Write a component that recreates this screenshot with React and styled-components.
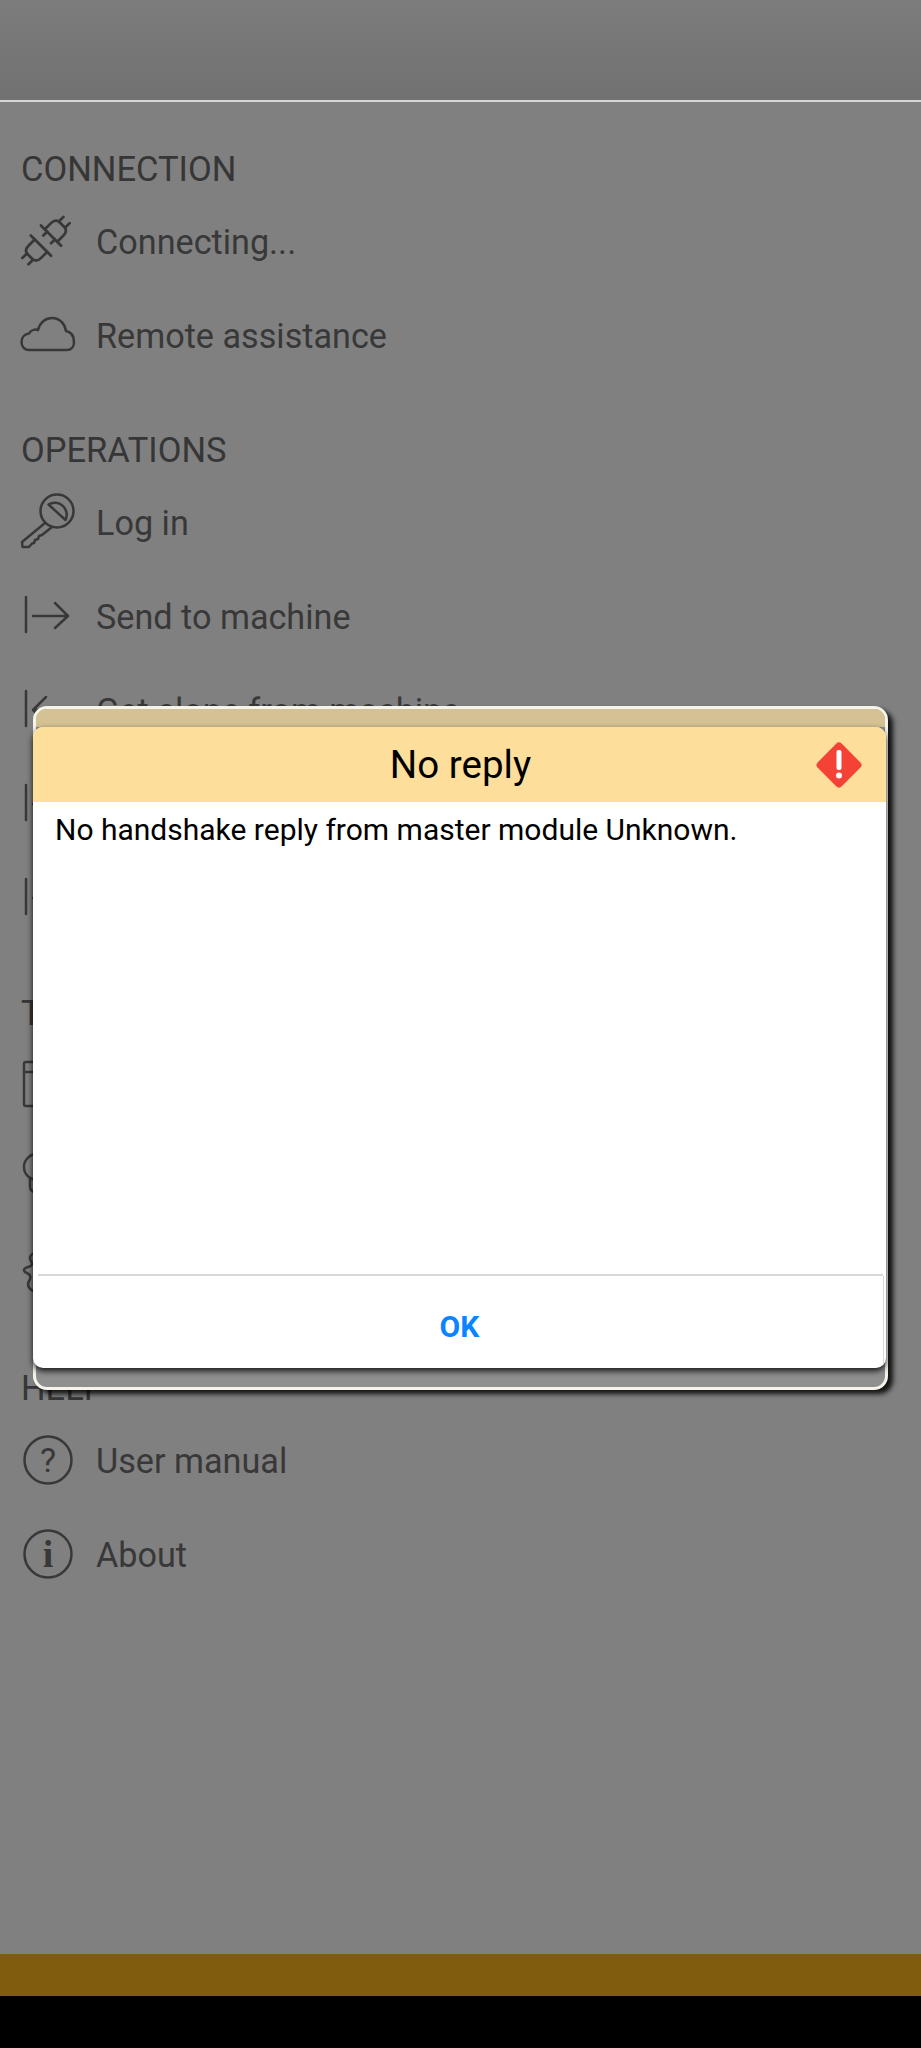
import React from 'react';
import styled, { createGlobalStyle } from 'styled-components';

const GlobalStyle = createGlobalStyle`
  html, body {
    margin: 0;
    padding: 0;
    background: #000;
  }
`;

const Screen = styled.div`
  position: relative;
  width: 921px;
  height: 2048px;
  display: flex;
  flex-direction: column;
  overflow: hidden;
  font-family: Roboto, "Liberation Sans", sans-serif;
`;

const Header = styled.div`
  height: 100px;
  flex: none;
  background: linear-gradient(#7c7c7c, #717171);
  border-bottom: 2px solid #d6d6d6;
`;

const Menu = styled.div`
  flex: 1;
  background: #808080;
  padding-top: 42px;
  display: flex;
  flex-direction: column;
  gap: 43px;
`;

const Section = styled.div`
  display: flex;
  flex-direction: column;
`;

const Heading = styled.div`
  height: 50px;
  line-height: 50px;
  padding-left: 21px;
  font-size: 34.5px;
  color: #363636;
`;

const Row = styled.div`
  height: 94px;
  display: flex;
  align-items: center;
  gap: 24px;
  padding-left: 20px;
`;

const Label = styled.span`
  padding-top: 2px;
  font-size: 34.2px;
  color: #383838;
`;

const IconBox = styled.svg`
  width: 52px;
  height: 52px;
  flex: none;
  overflow: visible;
  fill: none;
  stroke: #383838;
  stroke-width: 2.5;
  stroke-linejoin: round;
  stroke-linecap: round;
`;

const GlyphText = styled.text`
  stroke: none;
  fill: #383838;
  text-anchor: middle;
  font-size: ${(p) => p.$size}px;
  font-family: ${(p) => p.$serif ? '"Liberation Serif", serif' : 'Roboto, sans-serif'};
  font-weight: ${(p) => p.$serif ? 700 : 400};
`;

const Gold = styled.div`
  height: 42px;
  flex: none;
  background: #7f5c0e;
`;

const NavBar = styled.div`
  height: 52px;
  flex: none;
  background: #000;
`;

const DialogFrame = styled.div`
  position: absolute;
  left: 33px;
  top: 706px;
  width: 855px;
  height: 684px;
  box-sizing: border-box;
  border: 3px solid #f6f3ea;
  border-radius: 14px;
  background: #8f8f8f;
  box-shadow: 5px 4px 5px rgba(0, 0, 0, 0.85);
  display: flex;
  flex-direction: column;
`;

const TopBand = styled.div`
  height: 18px;
  flex: none;
  background: #d4c294;
  border-radius: 10px 10px 0 0;
`;

const Card = styled.div`
  height: 641px;
  flex: none;
  margin: 0 -1px 0 -3px;
  display: flex;
  flex-direction: column;
  background: #fff;
  border-radius: 10px;
  overflow: hidden;
  box-shadow: 0 3px 6px rgba(0, 0, 0, 0.85);
`;

const TitleBar = styled.div`
  position: relative;
  height: 75px;
  flex: none;
  padding-left: 2px;
  display: flex;
  align-items: center;
  justify-content: center;
  background: #fddf9b;
  font-size: 38.5px;
  color: #000;
`;

const WarnIcon = styled.svg`
  position: absolute;
  right: 23px;
  top: 14px;
  width: 48px;
  height: 48px;
`;

const Message = styled.div`
  flex: 1;
  padding: 10px 22px;
  font-size: 30px;
  line-height: 36px;
  color: #000;
`;

const Divider = styled.div`
  height: 2px;
  flex: none;
  margin: 0 3px 0 5px;
  background: #d8d8d8;
`;

const OkButton = styled.div`
  height: 92px;
  padding: 8px 0 0 3px;
  box-sizing: border-box;
  flex: none;
  display: flex;
  align-items: center;
  justify-content: center;
  margin-right: 2px;
  border-right: 1px solid #d8d8d8;
  font-size: 30px;
  font-weight: 700;
  color: #0a84ff;
`;

const PlugIcon = () => (
  <IconBox viewBox="0 0 52 52">
    <g transform="rotate(45 27 25) translate(-3 -3) scale(1.1)">
      <path d="M14 20 H40" />
      <path d="M19 20 V12 Q19 7 23 6 H31 Q35 7 35 12 V20" />
      <path d="M23 6 V0 M31 6 V0" />
      <path d="M22 20 V25 M32 20 V25" />
      <path d="M14 33 H40" />
      <path d="M19 33 V41 Q19 46 23 47 H31 Q35 46 35 41 V33" />
      <path d="M23 47 V53 M31 47 V53" />
    </g>
  </IconBox>
);

const CloudIcon = () => (
  <IconBox viewBox="0 0 52 52">
    <path d="M9 41 C4 41 1.5 37 1.5 33 C1.5 28 5 25 9 24.5 C11 21 15 20 18 21 C20 13 26 9 32 9 C40 9 45 15 46 22 C51 23 54 27 54 33 C54 38 51 41 47 41 Z" />
  </IconBox>
);

const KeyIcon = () => (
  <IconBox viewBox="0 0 52 52">
    <circle cx="37" cy="15" r="16.5" />
    <path d="M28.5 8.5 A12 12 0 0 1 45.5 24 Z" />
    <path d="M25 27 L2 46 L2.5 51 L9 51 L12 47.5 L14 47 L15 44 L18 43 L19 40 L22 39 L32 31" />
  </IconBox>
);

const BarArrow = ({ left }) => (
  <IconBox viewBox="0 0 52 52">
    <path d="M6 7 V42" />
    {left ? (
      <path d="M13 26 H48 M26 13 L13 26 L26 38" />
    ) : (
      <path d="M13 26 H48 M35 13 L48 26 L35 38" />
    )}
  </IconBox>
);

const BoxIcon = () => (
  <IconBox viewBox="0 0 52 52">
    <rect x="4" y="3" width="44" height="44" rx="2" />
    <path d="M4 13 H48" />
  </IconBox>
);

const LampIcon = () => (
  <IconBox viewBox="0 0 52 52">
    <circle cx="17" cy="14" r="13" />
    <path d="M10 25 V33 Q10 38 14 39 H30" />
  </IconBox>
);

const GearIcon = () => (
  <IconBox viewBox="0 0 52 52">
    <path d="M14 6 Q8 9 11 14 Q14 19 8 20 Q2 22 5 25 Q13 28 9 34 Q6 40 13 44 L26 46" />
  </IconBox>
);

const HelpIcon = () => (
  <IconBox viewBox="0 0 52 52">
    <circle cx="28" cy="26" r="23.5" />
    <GlyphText x="28" y="38" $size={34}>?</GlyphText>
  </IconBox>
);

const InfoIcon = () => (
  <IconBox viewBox="0 0 52 52">
    <circle cx="28" cy="26" r="23.5" />
    <GlyphText x="28" y="39" $size={38} $serif>i</GlyphText>
  </IconBox>
);

const sections = [
  {
    title: 'CONNECTION',
    rows: [
      { icon: <PlugIcon />, label: 'Connecting...' },
      { icon: <CloudIcon />, label: 'Remote assistance' },
    ],
  },
  {
    title: 'OPERATIONS',
    rows: [
      { icon: <KeyIcon />, label: 'Log in' },
      { icon: <BarArrow />, label: 'Send to machine' },
      { icon: <BarArrow left />, label: 'Get clone from machine' },
      { icon: <BarArrow />, label: '' },
      { icon: <BarArrow />, label: '' },
    ],
  },
  {
    title: 'TOOLS',
    rows: [
      { icon: <BoxIcon />, label: '' },
      { icon: <LampIcon />, label: '' },
      { icon: <GearIcon />, label: '' },
    ],
  },
  {
    title: 'HELP',
    rows: [
      { icon: <HelpIcon />, label: 'User manual' },
      { icon: <InfoIcon />, label: 'About' },
    ],
  },
];

const App = () => {
  return (
    <Screen>
      <GlobalStyle />
      <Header />
      <Menu>
        {sections.map((section) => (
          <Section key={section.title}>
            <Heading>{section.title}</Heading>
            {section.rows.map((row, i) => (
              <Row key={i}>
                {row.icon}
                <Label>{row.label}</Label>
              </Row>
            ))}
          </Section>
        ))}
      </Menu>
      <Gold />
      <NavBar />
      <DialogFrame>
        <TopBand />
        <Card>
          <TitleBar>
            No reply
            <WarnIcon viewBox="0 0 48 48">
              <rect x="7" y="7" width="34" height="34" rx="4" fill="#f44336" transform="rotate(45 24 24)" />
              <rect x="21.5" y="9" width="5" height="20" rx="2" fill="#fff" />
              <circle cx="24" cy="34.5" r="3" fill="#fff" />
            </WarnIcon>
          </TitleBar>
          <Message>No handshake reply from master module Unknown.</Message>
          <Divider />
          <OkButton>OK</OkButton>
        </Card>
      </DialogFrame>
    </Screen>
  );
};

export default App;
